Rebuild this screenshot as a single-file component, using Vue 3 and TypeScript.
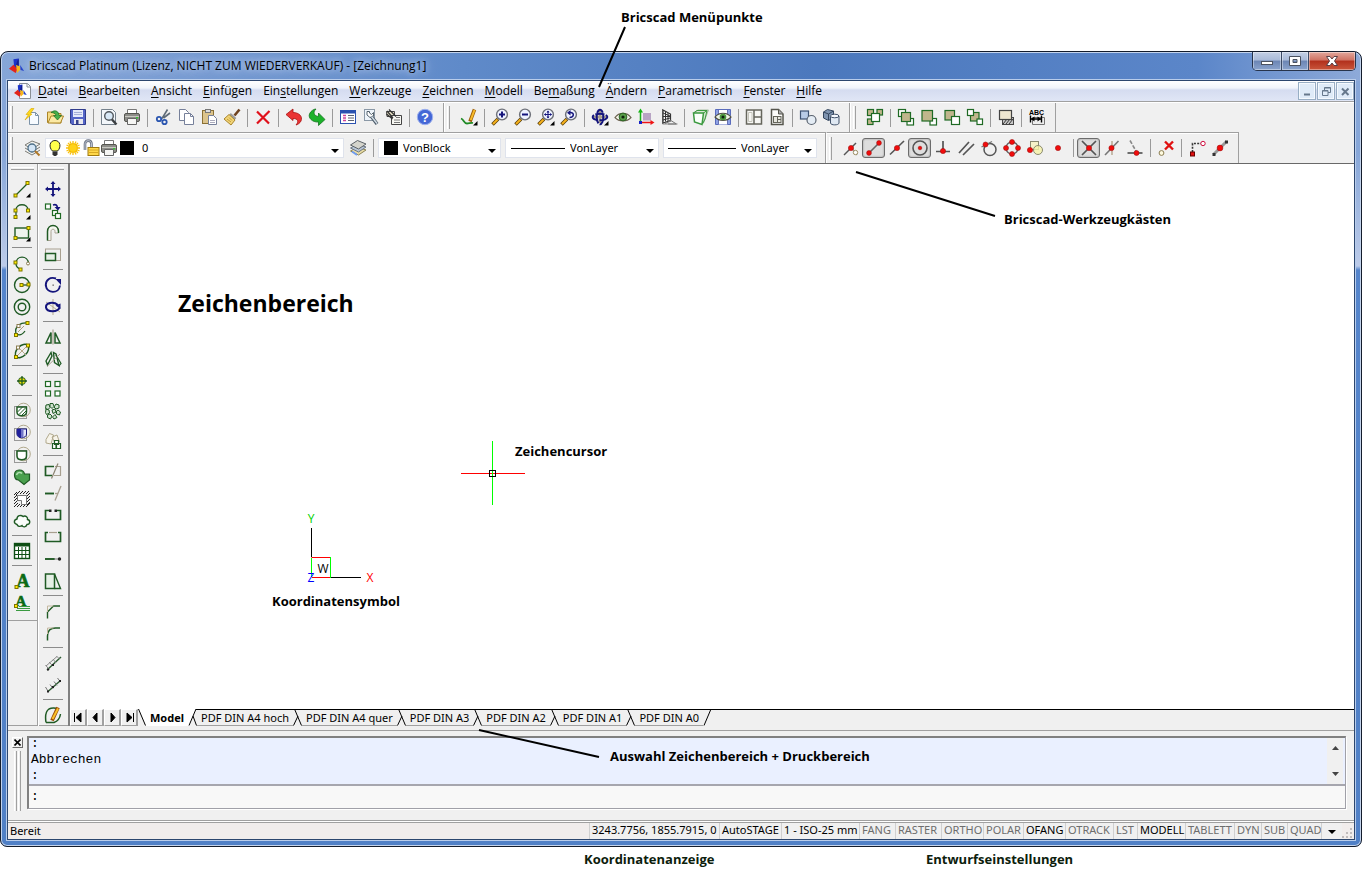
<script setup lang="ts">
import { ref } from 'vue'

type Item = { icon: string; label: string; on?: boolean } | null

const G = '#1f5a24'

const yd = (x: number, y: number) =>
  `<rect x="${x - 1.5}" y="${y - 1.5}" width="3" height="3" fill="#ffee00" stroke="#7d7400"/>`
const rd = (x: number, y: number, r = 2.2) =>
  `<circle cx="${x}" cy="${y}" r="${r}" fill="#f20c0c" stroke="#a01010" stroke-width=".6"/>`
const ln = (d: string, c = G, w = 1.3) => `<path d="${d}" stroke="${c}" stroke-width="${w}"/>`
const fly = '<path d="M17.5 13v4.5H13z" fill="#000"/>'
const lens = (inner: string, menu = false) =>
  '<path d="M7 11L1.500 16.500" stroke="#5b4008" stroke-width="3.600"/><path d="M6.500 11.500L2 16" stroke="#f7b21c" stroke-width="1.900"/>' +
  '<circle cx="11" cy="6.500" r="5.400" fill="#eef2ff" stroke="#6d7078" stroke-width="1.400"/>' + inner + (menu ? fly : '')
const sq = (x: number, y: number, s: number, f: string) =>
  `<rect x="${x}" y="${y}" width="${s}" height="${s}" fill="${f}" stroke="#1f6a24" stroke-width="1.200"/>`
const TAN = '#c0b68c'
const printer =
  '<path d="M4.500 6V1.500h9V6" fill="#fff" stroke="#777"/><rect x="1.500" y="5.500" width="15" height="8" rx="1.500" fill="#8d8d88" stroke="#55554f"/><path d="M2 8.500h14" stroke="#c9c9c2"/><path d="M4.500 10.500h9v6h-9z" fill="#f6f6f4" stroke="#666"/><rect x="13" y="9" width="2" height="1.500" fill="#35c435"/>'
const logo =
  '<path d="M5 1.500L11 .500v9L6 13z" fill="#1c34c8"/><path d="M0 12l5-4.500 4.500 5L7.500 17z" fill="#e2241c"/><path d="M8 7.500l4 1.500 1 4-4 4z" fill="#f7b81a"/><path d="M12.500 8l4.500 6.500-4-1z" fill="#2340cc"/><path d="M9.500 3l1.500-2.500V9L8 7.500z" fill="#16208c"/>'

const icons: Record<string, string> = {
  logo,
  doc: '<path d="M5.500 1.500h8l3 3v12h-11z" fill="#fff" stroke="#8a8f96"/><path d="M13 1.500v3.500h3.500" stroke="#8a8f96"/><g transform="translate(0 2) scale(.75)">' + logo + '</g>',
  new: '<path d="M6.500 4.500h6l3 3v9h-9z" fill="#f7fbff" stroke="#7d93a8"/><path d="M12.500 4.500v3h3" stroke="#7d93a8"/><path d="M8 .500L3 6.500h2.500L2 12l7-6H7L11 .500z" fill="#ffd91a" stroke="#d6a800" stroke-width=".6"/>',
  open: '<path d="M1.500 14.500V4h5l1.500 1.500H15V15z" fill="#f6dc84" stroke="#ab8427"/><path d="M2 15l3-7h12.500l-3 7z" fill="#fbe9a4" stroke="#ab8427"/><path d="M5 4.500c4-3.500 8-1 8 3h2.500L11.500 12 7.500 7.500H10c0-1.500-2-3-5-3z" fill="#47b04b" stroke="#1c6b22" stroke-width=".7"/>',
  save: '<path d="M1.500 1.500h15v15H3L1.500 15z" fill="#5566c8" stroke="#303c8c"/><rect x="4" y="2" width="10" height="7" fill="#e6ebfa"/><path d="M5 4.500h8M5 6.500h8" stroke="#a6b0d8"/><rect x="5" y="11" width="9" height="5" fill="#e8e8ef"/><rect x="7" y="12" width="2.500" height="4" fill="#37428c"/>',
  preview: '<path d="M1.500 1.500h11l3 3v12h-14z" fill="#f3f7fb" stroke="#75818c"/><circle cx="9" cy="8" r="4.300" fill="#d8e8f6" stroke="#52585e" stroke-width="1.400"/><path d="M12 11.500l4.500 5" stroke="#3c3f42" stroke-width="2.400"/>',
  print: printer,
  cut: '<path d="M8 10.500L13.500 1.500M9.500 10L16 5" stroke="#5e6b78" stroke-width="1.600"/><circle cx="5" cy="11" r="2.200" stroke="#2b56b0" stroke-width="1.800"/><circle cx="10.500" cy="14" r="2.200" stroke="#2b56b0" stroke-width="1.800"/>',
  copy: '<path d="M2.500 1.500h6l3 3v8h-9z" fill="#fff" stroke="#76809a"/><path d="M7.500 5.500h6l3 3v8h-9z" fill="#fff" stroke="#76809a"/><path d="M13.500 5.500v3h3" stroke="#76809a"/>',
  paste: '<rect x="2.500" y="2.500" width="11" height="13" fill="#dcc48c" stroke="#8a7034"/><rect x="5.500" y="1.500" width="5" height="3" fill="#ddd" stroke="#777"/><path d="M8.500 7.500h5l3 3v6h-8z" fill="#fff" stroke="#76809a"/><path d="M10 12.500h5M10 14.500h5" stroke="#aab"/>',
  brush: '<path d="M16.500 1.500l-5 6" stroke="#6f4320" stroke-width="2.600"/><path d="M7 6l5.500 5" stroke="#9b9b9b" stroke-width="2.400"/><path d="M6 6.500l6 5.500-4 5L1 11z" fill="#f3d679" stroke="#a8842c"/><path d="M4 11l4 3M6 9.500l3 3" stroke="#c29a38"/>',
  del: '<path d="M3 3.500l12 12M15.500 3L3 15.500" stroke="#e0101a" stroke-width="2.200"/>',
  undo: '<path d="M1 6.500L8 1v3.500c6 0 10 4 8 8.500-1 2-3 3.500-5 4 3-3.500 2-6.500-3-6.500V12.500z" fill="#ea3434" stroke="#a81212" stroke-width=".8"/>',
  redo: '<path d="M17 11.500L10.500 17.500V14C4 14.500 0 9.500 1.500 6 2.500 3 6 1 8 1 4.500 4.500 6 8 10.500 8.500V5z" fill="#1cb22a" stroke="#14741f" stroke-width=".8"/>',
  props: '<rect x="1.500" y="2.500" width="15" height="13" fill="#fff" stroke="#2b52b0"/><path d="M1.500 4h15" stroke="#2b52b0" stroke-width="3"/><path d="M9 7.500h6M9 10h6M9 12.500h6" stroke="#5c6270"/><path d="M4 7.500h3M4 10h3M4 12.500h3" stroke="#d0459c" stroke-width="1.500"/>',
  wrench: '<rect x="2.500" y="1.500" width="10" height="11" fill="#eef4fa" stroke="#8a98a6"/><path d="M5 3.500v3.500l3 2.500 3.500-1.500V4.500L9.500 6.500 7.500 5V3.500z" fill="#fff" stroke="#56646f"/><path d="M9.500 8.500l5.500 7.500" stroke="#4d5c6a" stroke-width="3.400"/><path d="M9.500 8.500l5.500 7" stroke="#d5dfe8" stroke-width="1.400"/>',
  explorer: '<path d="M1.500 3.500h8v5H2z" fill="#e9e2c6" stroke="#444"/><path d="M6.500 7.500h10v9h-10z" fill="#f7f7f2" stroke="#444"/><path d="M11 9.500h4M9 12h6M9 14.500h6" stroke="#777"/><path d="M2 3l6 7M4 1.500l7 7M1.500 6l6 5" stroke="#333" stroke-width="1.200"/>',
  help: '<circle cx="9" cy="9" r="7.700" fill="#4467d6" stroke="#9cb0ee"/><text x="9" y="14" text-anchor="middle" font-family="Liberation Sans, sans-serif" font-weight="700" font-size="13" fill="#fff">?</text>',
  sketch: '<path d="M1 10.500c3 1 3 5 6 5 2 0 4-1 6-.5" stroke="#1f8a24" stroke-width="1.800"/><path d="M14.500 1.500l-4.500 12" stroke="#9c5f08" stroke-width="3.600"/><path d="M14.500 2l-3.800 10" stroke="#f9bc2a" stroke-width="2"/>' + fly,
  zin: lens('<path d="M8 6.500h6M11 3.500v6" stroke="#14147c" stroke-width="2"/>'),
  zout: lens('<path d="M8 6.500h6" stroke="#14147c" stroke-width="2"/>'),
  zext: lens('<path d="M7.500 6.500h7M11 3v7" stroke="#14147c"/><path d="M9.500 4.500L11 2.500l1.500 2zM9.500 8.500L11 10.500l1.500-2zM9 5L7 6.500 9 8zM13 5l2 1.500L13 8z" fill="#14147c"/>', true),
  zprev: lens('<path d="M9.500 9.500c5 0 5-5.500.5-5" stroke="#14147c" stroke-width="1.500"/><path d="M10.500 2v5.500L7 4.800z" fill="#14147c"/>'),
  orbit: '<path d="M9 3v12M3 9h12" stroke="#aaa18c" stroke-width="2.600"/><ellipse cx="9" cy="9" rx="7.300" ry="3.300" stroke="#14147c" stroke-width="2" stroke-dasharray="9 1.500"/><ellipse cx="9" cy="9" rx="3.300" ry="7.300" stroke="#14147c" stroke-width="2" stroke-dasharray="9 1.500"/>' + fly,
  eye: '<path d="M1 9.500C5 4 13 4 17 9.500 13 14 5 14 1 9.500z" fill="#f3f6ec" stroke="#6e6452" stroke-width="1.200"/><circle cx="9" cy="9" r="3.900" fill="#5aa04a" stroke="#2d6224"/><circle cx="9" cy="9" r="1.600" fill="#10250c"/>',
  ucs: '<rect x="6" y="5" width="8" height="7.500" fill="#b8a4c4"/><path d="M3.500 3v12" stroke="#13b313" stroke-width="1.500"/><path d="M1 4.500L3.500 .500 6 4.500z" fill="#13b313"/><path d="M4 14.500h11" stroke="#ee1515" stroke-width="1.500"/><path d="M13.500 12L17.500 14.500 13.500 17z" fill="#ee1515"/><rect x="2" y="13" width="3" height="3" fill="#1720c8"/>',
  persp: '<path d="M2.500 1v15h15" stroke="#888"/><path d="M3 2l7.500 4v6.500L3 15z" fill="#f7f7f7" stroke="#333" stroke-width="1.200"/><path d="M5.500 3.500v10M8 5v8M3 8.500h7M3 5l7 3M3 12l7-2" stroke="#333"/><path d="M10 12l6.500 4M5 15.500l6-2.500M8 16h8" stroke="#777"/>',
  view3d: '<path d="M2.500 5L7 2h10.500l-5 13" fill="#d8e8d4" stroke="#a8bca4"/><path d="M2.500 5h10l-1.500 11.500L3.500 14z" fill="#fafffa" stroke="#3c9a40" stroke-width="1.500"/><path d="M12.500 5L16 2.500M2.500 5L6 2.500h10L14 11l-2.500 5" stroke="#3c9a40"/>',
  render: '<path d="M1.500 1.500h15v15h-15z" fill="#8fa2e4" stroke="#5a6cbc"/><path d="M4.500 2v4h9V2M4.500 16.500v-5h9v5" fill="#fff" stroke="#6873b4"/><path d="M1 9C5 4 13 4 17 9 13 13.500 5 13.500 1 9z" fill="#eef4e6" stroke="#4e4e40" stroke-width="1.200"/><circle cx="9" cy="9" r="3.300" fill="#4d983e"/><circle cx="9" cy="9" r="1.500" fill="#102010"/>',
  vports: '<rect x="1.500" y="2" width="15" height="14" fill="#f7f7f4" stroke="#66665c" stroke-width="1.500"/><path d="M9 2v14M9 9h7" stroke="#66665c" stroke-width="1.500"/><path d="M3.500 4.500v9h3.500v-9z" stroke="#c4c4ba"/>',
  layout: '<path d="M3.500 1.500h7l4.500 4.500v10.500H3.500z" fill="#fdfdfb" stroke="#55554c" stroke-width="1.500"/><path d="M10.500 1.500V6H15" fill="#aaa" stroke="#55554c"/><rect x="5.500" y="8.500" width="7.500" height="6" stroke="#66665c" fill="#e8e8e0"/><path d="M9.500 8.500v6M9.500 11.500H13" stroke="#66665c"/>',
  group2d: '<rect x="1.500" y="3" width="8" height="8" fill="#b8cbe6" stroke="#3d5272" stroke-width="1.200"/><circle cx="12.500" cy="12" r="4.500" fill="#e4ecf4" stroke="#59626e" stroke-width="1.200"/>',
  group3d: '<path d="M1.500 4l4-2.500 6 1.500v7L6.500 12.500 1.500 10z" fill="#7f94b0" stroke="#34465e"/><path d="M1.500 4L6.500 6l5-3M6.500 6v6" stroke="#34465e"/><path d="M8.500 8v7c0 2.500 8.500 2.500 8.500 0V8" fill="#dfe8f2" stroke="#42526a"/><ellipse cx="12.700" cy="8" rx="4.200" ry="1.800" fill="#f5f9ff" stroke="#42526a"/>',
  ord1: sq(1.5, 1.5, 6, TAN) + sq(11, 1.5, 5.5, TAN) + sq(1.5, 11, 5.5, TAN) + sq(5.5, 5.5, 8, '#fff'),
  ord2: sq(1.5, 1.5, 7, '#fff') + sq(10, 10.500, 6.5, '#fff') + sq(4.5, 4.5, 9, TAN),
  ord3: sq(10, 10.5, 6.5, '#fff') + sq(2, 2.5, 10.5, TAN),
  ord4: sq(2, 2.5, 9.5, TAN) + sq(8.5, 8.5, 8, '#fff'),
  ord5: sq(4.5, 4.5, 8.5, TAN) + sq(1.5, 1.5, 6, '#fff') + sq(11, 11, 5.5, '#fff'),
  hatchback: '<rect x="5.500" y="9.500" width="11" height="7" fill="#c8c8c8" stroke="#444"/><path d="M6 16l4-5M9 16l4-5M12 16l4-5" stroke="#333"/><rect x="2.500" y="2.500" width="12" height="9" fill="#eee6d0" stroke="#444" stroke-width="1.200"/>',
  abc: '<path d="M4.500 9.500h12v7h-12z" fill="#eee" stroke="#777"/><text x="8.500" y="6.500" text-anchor="middle" font-family="Liberation Sans, sans-serif" font-weight="700" font-size="7" fill="#000">ABC</text><path d="M2.500 7.500v7M13.500 7.500v7M3 11h10" stroke="#000" stroke-width="1.400"/><path d="M6.500 8.500v5L3 11zM9.500 8.500v5L13 11z" fill="#000"/>',
  layers: '<path d="M2 6l7-4 8 3-8 5zM2 9l7 4 8-5M2 12l7 4 8-5" fill="#f2f2ee" stroke="#7c7c76"/><circle cx="9" cy="9" r="4" fill="#d4e6f6" stroke="#4e7089" stroke-width="1.300"/><path d="M12 12l4.500 4.500" stroke="#b07828" stroke-width="2"/>',
  layerprev: '<path d="M1.500 12l7-4 8.500 3-7.500 5z" fill="#e8dba4" stroke="#8d8455"/><path d="M1.500 9l7-4L17 8l-7.500 5z" fill="#b8c6d8" stroke="#6d7884"/><path d="M1.500 6l7-4.500L17 5l-7.500 5z" fill="#d4d4cc" stroke="#5c6268"/><path d="M3 12.500l5 3.500" stroke="#6f9cf0" stroke-width="2"/>',
  bulb: '<path d="M6.500 12C2.500 8.500 3.500 1.500 9 1.500s6.500 7 2.500 10.500z" fill="#ffff4a" stroke="#222"/><path d="M6.500 12.500h5v3l-1.500 1.500H8L6.500 15.500z" fill="#333"/>',
  sun: '<path d="M9 2v14M2 9h14M4 4l10 10M14 4L4 14M6 2.500l6 13M12 2.500l-6 13M2.500 6l13 6M15.500 6l-13 6" stroke="#f8c010" stroke-width="1.300"/><circle cx="9" cy="9" r="4.300" fill="#ffd21a" stroke="#f4bc00"/>',
  lock: '<path d="M3 11V5c0-4.500 6.500-4.500 6.500 0v3" stroke="#6d7585" stroke-width="2.600"/><path d="M3 11V5c0-4.500 6.500-4.500 6.500 0v3" stroke="#cfd6e2" stroke-width=".8"/><rect x="6" y="8.500" width="11" height="8" fill="#ffd84a" stroke="#a07a10"/><path d="M6.500 11h10M6.500 13.500h10" stroke="#d7a824"/>',
  printer,
  snear: ln('M2 16L14 4', '#555', 1.500) + ln('M9 8l6 8', '#999') + rd(9, 9, 2.600) + '<circle cx="13.500" cy="13.500" r="2.200" fill="#fff" stroke="#9a8c60"/>',
  send: ln('M3 15L15 3', '#666', 1.600) + rd(4, 14, 2.4) + rd(14, 4, 2.4),
  smid: ln('M2 15.500L16 2', '#555', 1.600) + rd(9, 9, 2.600),
  scen: '<circle cx="9" cy="9" r="7" stroke="#555" stroke-width="1.600"/>' + rd(9, 9, 1.800),
  sperp: ln('M9 2v10M2 12.500h14', '#555', 1.700) + rd(9, 12, 2.600),
  spar: ln('M2 14L12 3M6 16L17 5', '#555', 1.700),
  stan: '<circle cx="10" cy="10.500" r="6" stroke="#555" stroke-width="1.500"/>' + ln('M1.500 8L12 2.500', '#777') + rd(5.500, 5.500, 2.500),
  squad: '<circle cx="9" cy="9" r="6" stroke="#666" stroke-width="1.400"/>' + rd(9, 3, 2.5) + rd(9, 15, 2.5) + rd(3, 9, 2.5) + rd(15, 9, 2.5),
  sins: '<rect x="4.500" y="2.500" width="8" height="8" fill="#f6f2c8" stroke="#8a8a70"/><circle cx="12" cy="11" r="4.500" fill="#f6f2a8" fill-opacity=".8" stroke="#8a8a70"/>' + rd(4, 11, 2.600),
  snode: rd(9, 9, 2.600),
  sint: ln('M2 2l14 14M16 2L2 16', '#555', 1.700) + rd(9, 9, 2.600),
  sapp: ln('M2 16L15.500 2', '#777', 1.600) + ln('M9 2v14', '#a8987c', 1.200) + rd(8.500, 9, 2.600),
  sext: '<path d="M4 1.500L10 12" stroke="#888" stroke-width="1.600" stroke-dasharray="4 1.500"/>' + ln('M1.500 14h15', '#555', 1.700) + rd(10.500, 14, 2.500),
  sclear: '<circle cx="4.500" cy="14" r="2.400" fill="#fffbe0" stroke="#8a7c50"/><path d="M8 2.500l8 8M16 2.500l-8 8" stroke="#e01010" stroke-width="2.400"/>',
  sfrom: '<path d="M4.500 13V4.500h9" stroke="#333" stroke-width="1.600" stroke-dasharray="2 1.300"/><rect x="2.500" y="13" width="4" height="4" fill="#e01010" stroke="#600"/><circle cx="15" cy="4.500" r="2.200" fill="#fff" stroke="#d01040"/>',
  stemp: ln('M2.500 15.500L15.500 2.500', '#999', 3) + '<rect x="1.500" y="14" width="3" height="3" fill="#333"/><rect x="14" y="1.500" width="3" height="3" fill="#333"/>' + rd(9, 9, 2.900),
  line: ln('M3 15L15 3') + yd(2.5, 15.5) + yd(14.500, 3) + fly,
  pline: ln('M3 15V8c0-7 12-7 12 0') + yd(2.5, 15) + yd(2.5, 8.500) + yd(15, 8.500) + fly,
  rect: '<rect x="2" y="4" width="13.500" height="10" fill="#eef4ee" stroke="#1f5a24" stroke-width="1.400"/>' + yd(2.500, 14) + yd(15.500, 4) + fly,
  arc: ln('M3 9.500C3 1 15 1 15.500 9.500M3 9.500c0 3 2 5 5 6') + yd(2.5, 8.5) + yd(7.5, 15.5) + '<circle cx="15" cy="9.500" r="1.500" fill="#fff" stroke="#8a7c50"/>',
  circle: '<circle cx="9" cy="9" r="7.500" stroke="#1f5a24" stroke-width="1.400"/>' + ln('M9 9h6') + yd(8.500, 9) + yd(15.500, 8.500),
  donut: '<circle cx="9" cy="9" r="7.700" stroke="#1f5a24" stroke-width="1.400"/><circle cx="9" cy="9" r="3.800" stroke="#1f5a24" stroke-width="1.400"/>',
  elarc: ln('M3 14C1 6 8 2 15 3M3 14c4 2 7 0 9-3') + ln('M5 12l6-6', '#a89c80', 1) + yd(3, 15) + yd(14.500, 3) + '<rect x="4" y="4.500" width="3" height="3" fill="#fff" stroke="#8a7c50"/>',
  ellipse: '<ellipse cx="9" cy="9" rx="8" ry="5" transform="rotate(-45 9 9)" stroke="#1f5a24" stroke-width="1.400"/>' + ln('M5 5l8 8M4 14l10-10', '#b8a888', 1) + yd(3, 15) + yd(15, 3.500) + '<rect x="3.500" y="4" width="3" height="3" fill="#fff" stroke="#8a7c50"/>',
  point: '<circle cx="9" cy="9" r="3.500" fill="#f4e800" stroke="#1f5a24"/>' + ln('M9 4v10M4 9h10', G, 1.300),
  hatch: '<rect x="1.500" y="4.500" width="12" height="12" stroke="#999"/><circle cx="10.500" cy="8" r="6.800" stroke="#b0a88c"/><path d="M4 5h9.500v5c0 5-9.500 5-9.500 0z" fill="#fff" stroke="#1f5a24" stroke-width="1.400"/><path d="M4.500 10l5-5M6 12.500l7-7M8.500 13.500L13 9" stroke="#1f5a24"/>',
  gradient: '<rect x="1.500" y="4.500" width="12" height="12" stroke="#999"/><circle cx="10.500" cy="8" r="6.800" stroke="#b0a88c"/><path d="M4 5h9.500v5c0 5-9.500 5-9.500 0z" fill="#e4e6fa" stroke="#14147c"/><path d="M4 5h4v8.500c-3 0-4-2-4-3.500z" fill="#20209c"/><path d="M8 5h2.500v8.500H8z" fill="#7074c8"/>',
  boundary: '<rect x="1.500" y="4.500" width="12" height="12" stroke="#999"/><circle cx="10.500" cy="8" r="6.800" stroke="#b0a88c"/><path d="M4 5h9.500v5c0 5-9.500 5-9.500 0z" fill="#fff" stroke="#1f5a24" stroke-width="1.500"/>',
  region: '<path d="M1.500 7C1.500 .500 10.500 .500 11.500 6H16.500v6l-5.500 4.500L5.500 12C3 12 1.500 10 1.500 7z" fill="#4aa04e" stroke="#1f5a24" stroke-width="1.200"/><path d="M3.500 7c1-3 4-3 5.500-1.500" stroke="#b4e0b4" stroke-width="1.600"/>',
  wipe: '<path d="M1 5l3-3M3 5l4-4M7 4l3-3M10 4l3-3M13 4l3-3M14 6l3-3M14 9l3-3M14 12l3-3M14 15l3-3M13 17l4-4M10 17l3-3M7 17l3-3M4 17l3-3M1 17l4-4M1 14l4-4M1 11l4-4M1 8l3-3" stroke="#222"/><path d="M4.500 5.500h9v9h-5v-4h-4z" fill="#fff" stroke="#777"/>',
  cloud: '<path d="M4 12.500c-3.500-1-3.500-4.500 0-5.500 0-3.500 4-4.500 6-2.500 3-1.500 5 1 4.500 3 3.500 1 2.500 5-.5 5-1 3-4 3-5 1-2 1.500-4.500 1-5-1z" fill="#fafdfa" stroke="#1f5a24" stroke-width="1.400"/>',
  table: '<rect x="1.500" y="1.500" width="15" height="15" fill="#fff" stroke="#0e4f14" stroke-width="1.400"/><path d="M1.500 3h15" stroke="#0e4f14" stroke-width="3"/><path d="M1.500 8.500h15M1.500 12.500h15M5.500 5v11M9 5v11M12.700 5v11" stroke="#0e4f14"/>',
  text: '<text x="10" y="15" text-anchor="middle" font-family="Liberation Serif, serif" font-weight="700" font-size="18" fill="#0c6a14" stroke="#0c6a14" stroke-width=".6">A</text>' + yd(3.500, 15),
  mtext: '<text x="8" y="12" text-anchor="middle" font-family="Liberation Serif, serif" font-weight="700" font-size="15" fill="#0c6a14" stroke="#0c6a14" stroke-width=".6">A</text><path d="M6 12.500h11M4 14.500h13M3 16.500h14" stroke="#3a9a40"/>' + yd(3, 12),
  move: '<path d="M9 2v14M2 9h14" stroke="#14147c" stroke-width="1.800"/><path d="M6.500 4L9 1l2.500 3zM6.500 14L9 17l2.500-3zM4 6.500L1 9l3 2.500zM14 6.500L17 9l-3 2.500z" fill="#14147c"/>',
  copyobj: sq(1.5, 2, 5, '#fff') + sq(8.5, 8.5, 5, '#fff') + sq(11.5, 11.5, 5, '#fff') + '<path d="M9 3c3-1 4 0 4.500 3" stroke="#14147c" stroke-width="1.600"/><path d="M10.500 5h6l-2.500 3.500z" fill="#14147c"/>',
  offset: '<path d="M7 16.500H3.500V7.500c0-8 11-8 11 0V9H11V7.500c0-3-4-3-4 0z" fill="#f4f6f0" stroke="#a8a090"/><path d="M3.500 16.500V7.500c0-8 11-8 11 0V9" stroke="#1f5a24" stroke-width="1.500"/>',
  scale: '<rect x="1.500" y="3" width="15" height="11.500" stroke="#a8a090"/><rect x="1.500" y="7.500" width="10" height="7" fill="#e6efe6" stroke="#1f5a24" stroke-width="1.500"/>',
  rotate: '<path d="M12 2.500C6 .500 1.500 4 1.800 9.500 3 18 15 18 16 9.500" stroke="#14147c" stroke-width="1.900"/><path d="M11.500 3H17v6z" fill="#14147c"/><rect x="8.500" y="8.500" width="1.300" height="1.300" fill="#555"/>',
  rotate3d: '<path d="M9 1v16M2 4l14 10" stroke="#b8ac90"/><path d="M14 7C9 3 1.500 5 2 9.500c1 5 12 5 13.500 0" stroke="#14147c" stroke-width="2"/><path d="M11.500 7.500l5-2V11z" fill="#14147c"/>',
  mirror: ln('M7 4.500v10.500H2z', G, 1.5) + ln('M11 4.500v10.500h5z', G, 1.5) + ln('M9 1.500v15', '#a8a090', 1.200),
  mirror3d: ln('M7 2.500L2 11l1.500 4L8 6z', G, 1.4) + ln('M9.500 2.500l1 10 4.500 3L12 4z', G, 1.4) + ln('M12 5l5 8.500-2 2.500', G, 1.200) + ln('M3 16.500L16 4', '#a8a090', 1),
  array: sq(1.5, 1.5, 5, '#fff') + sq(11, 1.5, 5, '#fff') + sq(1.5, 11, 5, '#fff') + sq(11, 11, 5, '#fff'),
  parray: '<path d="M6 1.500h3l1 3-2 2-2-2zM12 2l3 1v3l-3 1-2-2zM14 8l2.500 2-1 3-3-1v-3zM11 12.500l2 3-3 1.500-1.500-2zM6 12l2 2-1.500 3-3-1.500V13zM2 7l3 1 .5 3-3 1.500-1-2zM2 3l3-.5 1 3-2 2-2.500-1zM8 8l3-1 1 3-3 1.500z" fill="#cfe2cf" stroke="#1f5a24"/>',
  stretch: '<path d="M2 7.500l3.500-6 4 1.500-2.500 9-5-1zM8 5l5-2 2.500 7-4 2z" fill="#f7f4ea" stroke="#b0a88c"/><path d="M8.500 11.500h4v5h-4zM10.500 8.500h4v4h-4zM12 11.500h4.500v5H12z" fill="#fff" stroke="#1f5a24" stroke-width="1.200"/>',
  trim: ln('M10 4.500H1.500v9H8', G, 1.700) + ln('M11 4.500h5.500v9H10', '#a8a090', 1.200) + ln('M7.500 16.500L14 1.500', '#8a8270', 1.200),
  extend: ln('M1 9.500h9', G, 1.900) + ln('M11 9.500h3', '#a8a090') + ln('M11 16.500L17 2', '#a8a090', 1.300),
  brk: ln('M5 4.500H1.500v9h15v-9H13', G, 1.700) + '<rect x="5" y="3.500" width="2.500" height="2.500" fill="#222"/><rect x="10.500" y="3.500" width="2.500" height="2.500" fill="#222"/>',
  join: ln('M4 4.500H1.500v9h15v-9H14', G, 1.700) + ln('M5 4.500h8', '#a8a090', 1.200),
  lengthen: ln('M1 9h10', G, 1.900) + ln('M10 9h6', '#888', 1.200) + '<circle cx="15.500" cy="9" r="1.700" fill="#222"/>',
  chamface: '<path d="M1.500 2h9v14.500h-9z" fill="#e6f0e6" stroke="#1f5a24" stroke-width="1.500"/><path d="M10.500 2l6 14.500h-6" stroke="#1f5a24" stroke-width="1.400"/>',
  chamfer: ln('M3.500 16.500V10L9.500 4H16', G, 1.4) + ln('M3.500 10V4h6', '#c4b8a0', 1),
  fillet: ln('M3.500 16.500V12c0-5 3-8 8-8H16', G, 1.500) + ln('M3.500 10V4h6', '#c4b8a0', 1),
  measure: ln('M3 16L17 3', '#2a5a30', 1.400) + ln('M2 12L13 2.500M1.500 11l4 5M5 8l4 4M9 5l3 4M12.500 2l3 3', '#888', 1) + '<rect x="3" y="14.500" width="2" height="2" fill="#222"/><rect x="8" y="10" width="2" height="2" fill="#222"/>',
  divide: ln('M4 15.500L16 5', '#2a5a30', 1.500) + ln('M1.500 11l3 5M6 8.500l3 4M10 5.500l3 4M13.500 2l3 4', '#777', 1) + '<rect x="3" y="14.500" width="2" height="2" fill="#222"/><rect x="8" y="10" width="2" height="2" fill="#222"/><rect x="15" y="4" width="2" height="2" fill="#222"/>',
  edit: ln('M2 16.500h8C14 15 16 12 16.500 8M2 16.500C1 10 2 5 5 3 8 1.500 12 2 13 3', G, 1.500) + '<path d="M14 1.500l-6 13" stroke="#9c4f08" stroke-width="3.800"/><path d="M14 2.500l-5.500 10.500" stroke="#fbc12a" stroke-width="2"/>',
}

const i = (icon: string, label: string, on = false): Item => ({ icon, label, on })

const row1: Item[][] = [
  [
    i('new', 'Neu'), i('open', 'Öffnen'), i('save', 'Speichern'), null,
    i('preview', 'Seitenansicht'), i('print', 'Drucken'), null,
    i('cut', 'Ausschneiden'), i('copy', 'Kopieren'), i('paste', 'Einfügen'), i('brush', 'Eigenschaften übertragen'), null,
    i('del', 'Löschen'), null,
    i('undo', 'Rückgängig'), i('redo', 'Wiederherstellen'), null,
    i('props', 'Eigenschaften'), i('wrench', 'Einstellungen'), i('explorer', 'Explorer'), null,
    i('help', 'Hilfe'),
  ],
  [
    i('sketch', 'Skizze'), null,
    i('zin', 'Vergrößern'), i('zout', 'Verkleinern'), i('zext', 'Zoom Grenzen'), i('zprev', 'Zoom vorher'), null,
    i('orbit', 'Orbit'), i('eye', 'Ansicht'), i('ucs', 'BKS'), i('persp', 'Perspektive'), null,
    i('view3d', 'Ansicht 3D'), i('render', 'Rendern'), null,
    i('vports', 'Ansichtsfenster'), i('layout', 'Layout'), null,
    i('group2d', 'Gruppe 2D'), i('group3d', 'Gruppe 3D'),
  ],
  [
    i('ord1', 'Zeichnungsreihenfolge'), null,
    i('ord2', 'Nach vorne'), i('ord3', 'Nach hinten'), i('ord4', 'Über Objekt'), i('ord5', 'Unter Objekt'), null,
    i('hatchback', 'Schraffur nach hinten'), null,
    i('abc', 'Text nach vorne'),
  ],
]

const snaps: Item[] = [
  i('snear', 'Nächster'), i('send', 'Endpunkt', true), i('smid', 'Mittelpunkt'), i('scen', 'Zentrum', true),
  i('sperp', 'Lot'), i('spar', 'Parallel'), i('stan', 'Tangente'), i('squad', 'Quadrant'), i('sins', 'Basispunkt'), i('snode', 'Punkt'), null,
  i('sint', 'Schnittpunkt', true), i('sapp', 'Scheinbarer Schnittpunkt'), i('sext', 'Verlängerung'), null,
  i('sclear', 'Fang löschen'), null,
  i('sfrom', 'Von'), i('stemp', 'Mitte zwischen Punkten'),
]

const draw: Item[] = [
  i('line', 'Linie'), i('pline', 'Polylinie'), i('rect', 'Rechteck'), null,
  i('arc', 'Bogen'), i('circle', 'Kreis'), i('donut', 'Ring'), i('elarc', 'Ellipsenbogen'), i('ellipse', 'Ellipse'), null,
  i('point', 'Punkt zeichnen'), null,
  i('hatch', 'Schraffur'), i('gradient', 'Farbverlauf'), i('boundary', 'Umgrenzung'), i('region', 'Region'), i('wipe', 'Abdecken'), i('cloud', 'Revisionswolke'), null,
  i('table', 'Tabelle'), null,
  i('text', 'Text'), i('mtext', 'Mehrzeiliger Text'),
]

const modify: Item[] = [
  i('move', 'Schieben'), i('copyobj', 'Objekt kopieren'), i('offset', 'Parallele'), i('scale', 'Skalieren'), null,
  i('rotate', 'Drehen'), i('rotate3d', '3D Drehen'), null,
  i('mirror', 'Spiegeln'), i('mirror3d', '3D Spiegeln'), null,
  i('array', 'Reihe'), i('parray', 'Polare Reihe'), null,
  i('stretch', 'Strecken'), null,
  i('trim', 'Stutzen'), i('extend', 'Dehnen'), i('brk', 'Bruch'), i('join', 'Verbinden'), i('lengthen', 'Länge'), i('chamface', 'Fläche'), null,
  i('chamfer', 'Fasen'), i('fillet', 'Abrunden'), null,
  i('measure', 'Messen'), i('divide', 'Teilen'), null,
  i('edit', 'Bearbeiten'),
]

const menus: [string, string, string][] = [
  ['', 'D', 'atei'], ['', 'B', 'earbeiten'], ['', 'A', 'nsicht'], ['', 'E', 'infügen'], ['Ein', 's', 'tellungen'],
  ['', 'W', 'erkzeuge'], ['', 'Z', 'eichnen'], ['', 'M', 'odell'], ['Be', 'm', 'aßung'], ['', 'Ä', 'ndern'],
  ['', 'P', 'arametrisch'], ['', 'F', 'enster'], ['', 'H', 'ilfe'],
]

const navs = [
  { label: 'Erstes', d: 'M3.500 3v9M10 3v9L5 7.500z' },
  { label: 'Vorheriges', d: 'M9 3v9L5 7.500z' },
  { label: 'Nächstes', d: 'M6 3v9l4-4.500z' },
  { label: 'Letztes', d: 'M11.500 3v9M5 3v9l5-4.500z' },
]
const sheets = ['PDF DIN A4 hoch', 'PDF DIN A4 quer', 'PDF DIN A3', 'PDF DIN A2', 'PDF DIN A1', 'PDF DIN A0']

const cells = [
  { t: '3243.7756, 1855.7915, 0', on: true }, { t: 'AutoSTAGE', on: true }, { t: '1 - ISO-25 mm', on: true },
  { t: 'FANG' }, { t: 'RASTER' }, { t: 'ORTHO' }, { t: 'POLAR' }, { t: 'OFANG', on: true }, { t: 'OTRACK' }, { t: 'LST' },
  { t: 'MODELL', on: true }, { t: 'TABLETT' }, { t: 'DYN' }, { t: 'SUB' }, { t: 'QUAD' },
]
const command = ref('')
</script>

<template>
  <div class="page">
    <header class="note-top"><p class="note">Bricscad Menüpunkte</p></header>

    <main class="window">
      <div class="titlebar">
        <svg class="ic" viewBox="0 0 18 18" v-html="icons.logo" />
        <h1 class="title">Bricscad Platinum (Lizenz, NICHT ZUM WIEDERVERKAUF) - [Zeichnung1]</h1>
        <div class="caption">
          <button aria-label="Minimieren"><svg width="14" height="12" viewBox="0 0 14 12"><rect x="1.500" y="6.500" width="11" height="3" fill="#fff" stroke="#4b5260" /></svg></button>
          <button aria-label="Maximieren"><svg width="14" height="12" viewBox="0 0 14 12"><path d="M1.500 1.500h11v9h-11zM5 4.500v3h4v-3z" fill="#fff" fill-rule="evenodd" stroke="#4b5260" /></svg></button>
          <button class="close" aria-label="Schließen"><svg width="14" height="12" viewBox="0 0 14 12"><path d="M1.500 1.500h3.500l2 2.500 2-2.500h3.500L9.500 6l3 4.500H9L7 8l-2 2.500H1.500L4.500 6z" fill="#fff" stroke="#5a4046" /></svg></button>
        </div>
      </div>

      <div class="client">
        <nav class="menubar">
          <svg class="ic" viewBox="0 0 18 18" v-html="icons.doc" />
          <button v-for="m in menus" :key="m.join('')" class="menu">{{ m[0] }}<u>{{ m[1] }}</u>{{ m[2] }}</button>
          <div class="mdi">
            <button aria-label="Fenster minimieren"><svg width="11" height="11" viewBox="0 0 11 11"><path d="M2 8.500h6" stroke="#66788c" stroke-width="2" /></svg></button>
            <button aria-label="Fenster wiederherstellen"><svg width="11" height="11" viewBox="0 0 11 11"><path d="M3.500 4V1.500h6v5H7M3.500 2h6M1.500 4.500H7v5H1.500zM1.500 5H7" fill="none" stroke="#66788c" /></svg></button>
            <button aria-label="Fenster schließen"><svg width="11" height="11" viewBox="0 0 11 11"><path d="M2 2.500l6.500 6.500M8.500 2.500L2 9" stroke="#66788c" stroke-width="2" /></svg></button>
          </div>
        </nav>

        <div class="row">
          <div v-for="(g, gi) in row1" :key="gi" class="group">
            <i class="grip" />
            <template v-for="(b, bi) in g" :key="bi">
              <button v-if="b" class="tool" :aria-label="b.label"><svg class="ic" viewBox="0 0 18 18" v-html="icons[b.icon]" /></button>
              <i v-else class="sep" />
            </template>
          </div>
        </div>

        <div class="row second">
          <div class="group">
            <i class="grip" />
            <button class="tool" aria-label="Layer"><svg class="ic" viewBox="0 0 18 18" v-html="icons.layers" /></button>
            <div class="combo layer">
              <div class="pre">
                <svg v-for="n in ['bulb', 'sun', 'lock', 'printer']" :key="n" class="ic" viewBox="0 0 18 18" v-html="icons[n]" />
                <b class="swatch" />
              </div>
              <select aria-label="Aktueller Layer"><option>0</option></select>
              <i class="arrow" />
            </div>
            <button class="tool" aria-label="Layer vorher"><svg class="ic" viewBox="0 0 18 18" v-html="icons.layerprev" /></button>
            <i class="sep" />
            <div class="combo color">
              <div class="pre"><b class="swatch" /></div>
              <select aria-label="Farbe"><option>VonBlock</option></select>
              <i class="arrow" />
            </div>
            <div class="combo ltype">
              <div class="pre"><b class="stroke" /></div>
              <select aria-label="Linientyp"><option>VonLayer</option></select>
              <i class="arrow" />
            </div>
            <div class="combo weight">
              <div class="pre"><b class="stroke" /></div>
              <select aria-label="Linienstärke"><option>VonLayer</option></select>
              <i class="arrow" />
            </div>
          </div>
          <div class="group">
            <i class="grip" />
            <template v-for="(b, bi) in snaps" :key="bi">
              <button v-if="b" class="tool" :class="{ on: b.on }" :aria-label="b.label" :aria-pressed="b.on"><svg class="ic" viewBox="0 0 18 18" v-html="icons[b.icon]" /></button>
              <i v-else class="sep" />
            </template>
          </div>
        </div>

        <div class="work">
          <div class="dock">
            <div v-for="(bar, k) in [draw, modify]" :key="k" class="bar">
              <div class="stack">
                <i class="hgrip" />
                <template v-for="(b, bi) in bar" :key="bi">
                  <button v-if="b" class="vtool" :aria-label="b.label"><svg class="ic" viewBox="0 0 18 18" v-html="icons[b.icon]" /></button>
                  <i v-else class="vsep" />
                </template>
              </div>
            </div>
          </div>

          <div class="sheet">
            <div class="canvas">
              <h2 class="area">Zeichenbereich</h2>
              <p class="note pin-tools">Bricscad-Werkzeugkästen</p>
              <p class="note pin-cursor">Zeichencursor</p>
              <p class="note pin-ucs">Koordinatensymbol</p>
              <svg class="cross" viewBox="0 0 65 65">
                <path d="M0 32.500h64" stroke="#f00" /><path d="M31.500 0v64" stroke="#0f0" />
                <rect x="28.500" y="29.500" width="6" height="6" fill="none" stroke="#000" />
              </svg>
              <svg class="ucs" viewBox="0 0 80 80">
                <path d="M11.500 17v29M31 66.500h30" stroke="#000" />
                <path d="M11.500 46.500h19M12 66.500h19" stroke="#f00" /><path d="M11.500 47v19M30.500 46v21" stroke="#0f0" />
                <text x="11" y="12" fill="#00d000">Y</text><text x="70" y="71" fill="#f00">X</text>
                <text x="11" y="71" fill="#00f">Z</text><text x="23" y="62" fill="#000">W</text>
              </svg>
            </div>
            <div class="tabs">
              <button v-for="n in navs" :key="n.label" class="nav" :aria-label="n.label"><svg width="14" height="15" viewBox="0 0 14 15"><path :d="n.d" fill="#000" stroke="#000" /></svg></button>
              <svg class="edge first" width="8" height="17" viewBox="0 0 8 17"><path d="M0 0h1l7 17H0z" fill="#f0f0f0" /><path d="M.5 0l7 16.500" stroke="#000" /></svg>
              <button class="tab active">Model</button>
              <svg class="edge" width="9" height="17" viewBox="0 0 9 17"><path d="M0 0h8L1 17H0z" fill="#fff" /><path d="M8 .5h1M1 16.500L8 0M5 7l3.500 9.500" stroke="#000" fill="none" /></svg>
              <template v-for="(s, si) in sheets" :key="s">
                <button class="tab">{{ s }}</button>
                <svg v-if="si < sheets.length - 1" class="edge" width="9" height="17" viewBox="0 0 9 17"><path d="M0 .5h9M1.500 0l7 16.500M.5 16.500L5 7" stroke="#000" fill="none" /></svg>
              </template>
              <svg class="edge" width="9" height="17" viewBox="0 0 9 17"><path d="M0 .5h9M1 16.500L8 0" stroke="#000" fill="none" /></svg>
              <i class="rest" />
            </div>
          </div>
        </div>

        <section class="command">
          <div class="side">
            <button class="x" aria-label="Befehlszeile schließen"><svg width="7" height="7" viewBox="0 0 7 7"><path d="M.5.5l6 6M6.500.5l-6 6" stroke="#000" stroke-width="1.600" /></svg></button>
            <i class="vgrips" />
          </div>
          <div class="console">
            <div class="history">
              <div class="log"><p>:</p><p>Abbrechen</p><p>:</p></div>
              <div class="scroll">
                <button aria-label="Nach oben"><svg width="7" height="4" viewBox="0 0 7 4"><path d="M0 4l3.500-4L7 4z" fill="#444" /></svg></button>
                <button aria-label="Nach unten"><svg width="7" height="4" viewBox="0 0 7 4"><path d="M0 0h7L3.500 4z" fill="#444" /></svg></button>
              </div>
            </div>
            <div class="entry"><label for="cmd">:</label><input id="cmd" v-model="command" type="text" autocomplete="off" /></div>
          </div>
        </section>

        <footer class="status">
          <span class="ready">Bereit</span>
          <div class="cells">
            <span v-for="c in cells" :key="c.t" class="cell" :class="{ lit: c.on }">{{ c.t }}</span>
            <button class="cell more" aria-label="Statusleiste anpassen"><i class="arrow" /></button>
          </div>
          <svg class="size" width="12" height="12" viewBox="0 0 12 12"><path d="M8 1h2v2H8zM8 5h2v2H8zM8 9h2v2H8zM4 5h2v2H4zM4 9h2v2H4zM0 9h2v2H0z" fill="#c0bcbc" /></svg>
        </footer>
      </div>
    </main>

    <footer class="note-bottom">
      <p class="note">Koordinatenanzeige</p>
      <p class="note">Entwurfseinstellungen</p>
    </footer>

    <p class="note pin-tabs">Auswahl Zeichenbereich + Druckbereich</p>
    <svg class="leaders"><path d="M625 27l-26 60M856 172l139 44M479 730l120 27" stroke="#000" stroke-width="2" /></svg>
  </div>
</template>

<style>
body { margin: 0; background: #fff; }
</style>

<style scoped>
* { box-sizing: border-box; }
p, h1, h2 { margin: 0; }
button { padding: 0; border: 0; background: none; font: inherit; color: inherit; }
.page { position: relative; display: flex; flex-direction: column; min-height: 100vh; font: 11px/14px "Noto Sans", sans-serif; color: #000; }
.note { font: 700 13px/18px "Open Sans", sans-serif; white-space: nowrap; }
.note-top { height: 51px; padding: 8px 0 0 621px; }
.note-bottom { display: flex; height: 36px; padding: 3px 0 0 584px; color: #0c200c; }
.note-bottom .note + .note { margin-left: 211px; }
.note-bottom .note { width: 131px; }
.window {
  flex: 1; display: flex; flex-direction: column; padding: 0 6px 6px; border: 1px solid #131c2c; border-radius: 8px 8px 7px 7px;
  background: linear-gradient(90deg, #86a6d8, #5f8ac9 34%, #4b78bd 60%, #5b86c9 88%, #8eaad9) 0 0 / 100% 29px no-repeat,
    linear-gradient(180deg, #86a6d8 0, #86a6d8 100px, #bccbe9 214px, #5585cc 218px, #5080c6 100%);
  box-shadow: inset 0 0 0 1px #c3d3ec;
}
.ic { display: block; flex: none; width: 18px; height: 18px; fill: none; }
.titlebar { display: flex; height: 28px; align-items: flex-start; }
.titlebar .ic { width: 16px; height: 16px; margin: 6px 0 0 2px; }
.title { flex: 1; margin: 5px 0 0 4px; font: 400 12px/18px "Open Sans", sans-serif; white-space: nowrap; text-shadow: 0 0 6px #c5d5ee, 0 0 12px #c5d5ee; }
.caption { display: flex; height: 19px; margin-right: -1px; border: 1px solid #27344c; border-top: 0; border-radius: 0 0 5px 5px; overflow: hidden; }
.caption button { display: grid; place-items: center; width: 28px; background: linear-gradient(#c3cfe4, #a9bad8 45%, #6b85b4 50%, #8ba4cd); box-shadow: inset 0 0 0 1px #ffffff66; }
.caption button + button { border-left: 1px solid #3b4a66; width: 27px; }
.caption button.close { width: 47px; background: linear-gradient(#e2a79c, #cf7263 45%, #b2301c 50%, #c9563c); }
.client { flex: 1; display: flex; flex-direction: column; border: 1px solid #2c466e; background: #f0f0f0; box-shadow: 0 0 0 1px #b9cdeb; }
.menubar { display: flex; align-items: center; height: 21px; padding-left: 6px; border-bottom: 1px solid #a0a0a0; background: linear-gradient(#fff, #f1f4fb 35%, #d5dcf0 45%, #dfe5f5 95%); font: 12px/18px "Open Sans", sans-serif; }
.menubar .ic { margin-right: 6px; }
.menu { margin-right: 11px; white-space: nowrap; }
.menu u { text-underline-offset: 2px; text-decoration-thickness: 1px; }
.mdi { display: flex; gap: 1px; margin-left: auto; }
.mdi button { display: grid; place-items: center; width: 18px; height: 18px; border: 1px solid #98aec4; background: #dfebf8; box-shadow: inset 0 0 0 1px #f4f9fe; }
.row { display: flex; height: 30px; }
.row:not(.second) { border-top: 1px solid #fff; }
.group { display: flex; align-items: center; padding-right: 7px; border-left: 1px solid #fff; border-right: 1px solid #a0a0a0; }
.group:first-child { border-left: 0; }
.second { height: 32px; border-bottom: 1px solid #696969; }
.second .group { border-top: 1px solid #a0a0a0; box-shadow: inset 0 1px #fff; }
.second .group:first-child { padding-right: 8px; }
.grip { width: 3px; height: 23px; margin: 0 7px 0 2px; border-left: 1px solid #fff; border-right: 1px solid #a0a0a0; }
.tool { display: grid; place-items: center; width: 23px; height: 22px; }
.row:not(.second) .tool { height: 24px; padding-bottom: 2px; }
.tool.on { border: 1px solid #6c6c6c; border-radius: 3px; background: #dedede; box-shadow: inset 0 0 2px #888; height: 20px; }
.sep { width: 1px; height: 18px; margin: 0 3px 0 4px; background: #9a9a9a; }
.combo { display: flex; position: relative; height: 20px; border: 1px solid #dfe3ec; background: #fff; }
.combo select { flex: 1; min-width: 0; padding: 0; border: 0; background: none; appearance: none; font: inherit; color: #000; outline: 0; }
.pre { display: flex; align-items: center; }
.swatch { width: 14px; height: 14px; background: #000; }
.stroke { height: 1px; background: #000; }
.arrow { border: 4px solid transparent; border-top-color: #000; border-bottom: 0; pointer-events: none; }
.combo .arrow { position: absolute; right: 4px; top: 10px; }
.layer { width: 299px; margin: 0 2px; }
.layer .swatch { margin: 0 8px 0 2px; }
.color { width: 123px; margin-left: 1px; }
.color .swatch { margin: 0 5px; }
.ltype, .weight { width: 154px; margin-left: 4px; }
.ltype .stroke { width: 54px; margin: 0 5px; }
.weight .stroke { width: 68px; margin: 0 5px 0 4px; }
.work { flex: 1; display: flex; }
.dock { display: flex; border-right: 2px solid #808080; box-shadow: inset 0 -1px #a0a0a0; }
.bar { width: 30px; border-right: 1px solid #a0a0a0; }
.bar:last-child { border-right: 0; border-left: 1px solid #fff; padding-right: 1px; }
.stack { display: flex; flex-direction: column; align-items: center; padding: 0 1px 6px 0; border-bottom: 1px solid #a0a0a0; }
.bar:last-child .stack { padding-bottom: 0; border-bottom: 0; }
.hgrip { width: 23px; height: 3px; margin: 3px 0 8px; border-top: 1px solid #fff; border-bottom: 1px solid #a0a0a0; }
.vtool { display: grid; place-items: center; width: 23px; height: 22px; }
.vsep { width: 20px; height: 1px; margin: 3px 0 4px; background: #8c8c8c; }
.sheet { flex: 1; display: flex; flex-direction: column; min-width: 0; background: #fff; }
.canvas { flex: 1; position: relative; }
.area { position: absolute; left: 108px; top: 123px; font: 700 23px/32px "Open Sans", sans-serif; }
.canvas .note, .cross, .ucs { position: absolute; }
.pin-tools { left: 934px; top: 46px; }
.pin-cursor { left: 445px; top: 278px; }
.pin-ucs { left: 202px; top: 428px; }
.cross { left: 391px; top: 277px; width: 65px; height: 65px; }
.ucs { left: 230px; top: 347px; width: 80px; height: 80px; font: 12px "Open Sans", sans-serif; text-anchor: middle; }
.tabs { display: flex; height: 17px; background: #f0f0f0; }
.nav { display: grid; place-items: center; width: 17px; border-top: 1px solid #fff; border-right: 2px solid #a0a0a0; border-bottom: 1px solid #a0a0a0; border-left: 1px solid #fff; }
.tab { padding: 0 4px; border-top: 1px solid #000; border-bottom: 1px solid #a0a0a0; white-space: nowrap; }
.tab.active { border-color: #fff; background: #fff; font-weight: 700; }
.edge { flex: none; display: block; }
.edge.first { background: #fff; }
.rest { flex: 1; border-top: 1px solid #000; }
.command { display: flex; height: 90px; margin-top: 4px; padding: 5px 8px 0 4px; border-top: 1px solid #a0a0a0; }
.side { display: flex; flex-direction: column; align-items: center; width: 15px; padding-right: 4px; }
.x { display: grid; place-items: center; width: 11px; height: 11px; margin-top: 1px; border: 1px solid #fff; border-right-color: #696969; border-bottom-color: #696969; }
.vgrips { width: 7px; height: 60px; margin-top: 3px; border-left: 1px solid #fff; background: linear-gradient(90deg, #f0f0f0 1px, #a0a0a0 1px 2px, #f0f0f0 2px 3px, #fff 3px 4px, #f0f0f0 4px 5px, #a0a0a0 5px); }
.console { flex: 1; height: 73px; border: 2px solid #808080; border-right: 1px solid #a0a0a8; border-bottom: 1px solid #a0a0a8; box-shadow: 1px 1px #fff; font: 13px/16px "Liberation Mono", monospace; }
.history { display: flex; height: 48px; padding: 0 2px 0 1px; border-bottom: 2px solid #a6a6ae; background: #eaf0ff; }
.log { flex: 1; height: 48px; padding: 0 0 0 1px; overflow: hidden; margin-top: -2px; }
.scroll { display: flex; flex-direction: column; justify-content: space-between; width: 16px; padding: 6px 0; background: #f0f0f0; }
.scroll button { display: grid; place-items: center; height: 8px; }
.entry { display: flex; align-items: center; height: 22px; padding-left: 2px; background: #f8f8f8; }
.entry input { flex: 1; height: 20px; padding: 0; border: 0; outline: 0; background: none; font: inherit; }
.status { display: flex; height: 19px; border-top: 1px solid #a0a0a0; background: #f1edec; box-shadow: inset 0 1px #fff, inset 0 2px #a0a0a0; align-items: center; padding: 2px 0 0; }
.ready { flex: 1; padding-left: 2px; }
.cells { display: grid; grid-template-columns: 130px 62px 78px 36px 46px 42px 40px 42px 48px 24px 48px 49px 27px 26px 34px 21px; background: #f0f0f0; }
.cell { padding-left: 2px; border-left: 1px solid #d0d0d0; color: #6d6d6d; white-space: nowrap; height: 16px; }
.lit { color: #000; }
.more { display: grid; place-items: center; padding: 2px 0 0; }
.size { margin-top: 3px; }
.pin-tabs { position: absolute; left: 610px; top: 747px; }
.leaders { position: absolute; inset: 0; width: 100%; height: 100%; pointer-events: none; }
</style>
